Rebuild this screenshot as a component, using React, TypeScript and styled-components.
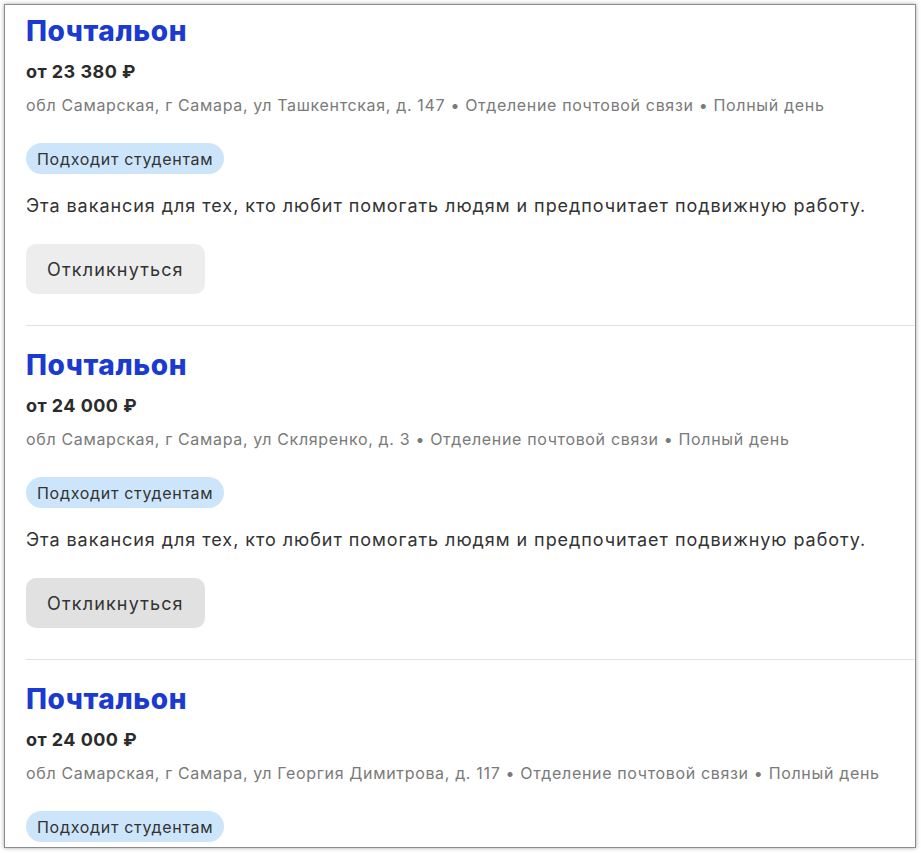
import React from "react";
import styled, { createGlobalStyle } from "styled-components";

const Global = createGlobalStyle`
  html, body { margin: 0; padding: 0; background: #ffffff; }
  body { font-family: Inter, "Noto Sans", "Liberation Sans", sans-serif; }
`;

const Frame = styled.div`
  box-sizing: border-box;
  margin: 4px;
  width: 912px;
  height: 844px;
  border: 1px solid #8c8c8c;
  box-shadow: 0 0 4px rgba(0, 0, 0, 0.35);
  background: #fff;
  overflow: hidden;
  padding: 0 0 0 21px;
`;

const Card = styled.article<{ $first?: boolean; $last?: boolean }>`
  padding: ${(p) => (p.$first ? "8px" : "21px")} 0 31px 0;
  border-bottom: ${(p) => (p.$last ? "none" : "1px solid #e2e2e2")};
  display: flex;
  flex-direction: column;
  align-items: flex-start;
`;

const Title = styled.a`
  font-size: 28px;
  line-height: 36px;
  font-weight: 800;
  color: #1b3acf;
  text-decoration: none;
  letter-spacing: 0.6px;
`;

const Price = styled.div`
  margin-top: 11px;
  font-size: 18px;
  line-height: 24px;
  font-weight: 700;
  color: #2b2b2b;
  letter-spacing: 0.45px;
`;

const Address = styled.div`
  margin-top: 10px;
  font-size: 16px;
  line-height: 22px;
  color: #7a7a7a;
  letter-spacing: 0.66px;
`;

const Tag = styled.span`
  margin-top: 27px;
  height: 31px;
  box-sizing: border-box;
  display: inline-flex;
  align-items: center;
  padding: 0 11px;
  border-radius: 16px;
  background: #cce5fb;
  color: #333;
  font-size: 16px;
  letter-spacing: 0.7px;
`;

const Description = styled.p`
  margin: 19px 0 0 0;
  font-size: 18px;
  line-height: 26px;
  color: #333;
  letter-spacing: 0.95px;
`;

const Button = styled.button<{ $hover?: boolean }>`
  margin-top: 25px;
  height: 50px;
  padding: 0 21px;
  border: none;
  border-radius: 10px;
  background: ${(p) => (p.$hover ? "#e1e1e1" : "#ededed")};
  color: #333;
  font-family: inherit;
  font-size: 18px;
  letter-spacing: 1.15px;
  cursor: pointer;
`;

type Job = {
  price: string;
  address: string;
  hover?: boolean;
  partial?: boolean;
};

const jobs: Job[] = [
  {
    price: "от 23 380 ₽",
    address:
      "обл Самарская, г Самара, ул Ташкентская, д. 147 • Отделение почтовой связи • Полный день",
  },
  {
    price: "от 24 000 ₽",
    address:
      "обл Самарская, г Самара, ул Скляренко, д. 3 • Отделение почтовой связи • Полный день",
    hover: true,
  },
  {
    price: "от 24 000 ₽",
    address:
      "обл Самарская, г Самара, ул Георгия Димитрова, д. 117 • Отделение почтовой связи • Полный день",
    partial: true,
  },
];

export default function App() {
  return (
    <>
      <Global />
      <Frame>
        {jobs.map((j, i) => (
          <Card key={i} $first={i === 0} $last={i === jobs.length - 1}>
            <Title href="#">Почтальон</Title>
            <Price>{j.price}</Price>
            <Address>{j.address}</Address>
            <Tag>Подходит студентам</Tag>
            {!j.partial && (
              <>
                <Description>
                  Эта вакансия для тех, кто любит помогать людям и предпочитает подвижную работу.
                </Description>
                <Button $hover={j.hover}>Откликнуться</Button>
              </>
            )}
          </Card>
        ))}
      </Frame>
    </>
  );
}
